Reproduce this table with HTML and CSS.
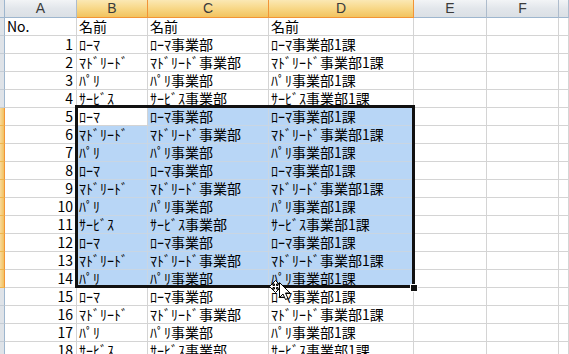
FILE: index.html
```html
<!DOCTYPE html>
<html lang="ja">
<head>
<meta charset="utf-8">
<link rel="stylesheet" href="styles.css">
</head>
<body>
<div class="sheet">
  <div class="row hdr">
    <div class="rh corner"></div><div class="ch">A</div><div class="ch on">B</div><div class="ch on">C</div><div class="ch on">D</div><div class="ch">E</div><div class="ch">F</div><div class="ch"></div>
  </div>
  <div class="row"><div class="rh"></div><div class="c">No.</div><div class="c">名前</div><div class="c">名前</div><div class="c">名前</div><div class="c"></div><div class="c"></div><div class="c"></div></div>
  <div class="row"><div class="rh"></div><div class="c n">1</div><div class="c">ﾛｰﾏ</div><div class="c">ﾛｰﾏ事業部</div><div class="c">ﾛｰﾏ事業部1課</div><div class="c"></div><div class="c"></div><div class="c"></div></div>
  <div class="row"><div class="rh"></div><div class="c n">2</div><div class="c">ﾏﾄﾞﾘｰﾄﾞ</div><div class="c">ﾏﾄﾞﾘｰﾄﾞ事業部</div><div class="c">ﾏﾄﾞﾘｰﾄﾞ事業部1課</div><div class="c"></div><div class="c"></div><div class="c"></div></div>
  <div class="row"><div class="rh"></div><div class="c n">3</div><div class="c">ﾊﾟﾘ</div><div class="c">ﾊﾟﾘ事業部</div><div class="c">ﾊﾟﾘ事業部1課</div><div class="c"></div><div class="c"></div><div class="c"></div></div>
  <div class="row"><div class="rh"></div><div class="c n">4</div><div class="c">ｻｰﾋﾞｽ</div><div class="c">ｻｰﾋﾞｽ事業部</div><div class="c">ｻｰﾋﾞｽ事業部1課</div><div class="c"></div><div class="c"></div><div class="c"></div></div>
  <div class="row"><div class="rh on"></div><div class="c n">5</div><div class="c">ﾛｰﾏ</div><div class="c s">ﾛｰﾏ事業部</div><div class="c s">ﾛｰﾏ事業部1課</div><div class="c"></div><div class="c"></div><div class="c"></div></div>
  <div class="row"><div class="rh on"></div><div class="c n">6</div><div class="c s">ﾏﾄﾞﾘｰﾄﾞ</div><div class="c s">ﾏﾄﾞﾘｰﾄﾞ事業部</div><div class="c s">ﾏﾄﾞﾘｰﾄﾞ事業部1課</div><div class="c"></div><div class="c"></div><div class="c"></div></div>
  <div class="row"><div class="rh on"></div><div class="c n">7</div><div class="c s">ﾊﾟﾘ</div><div class="c s">ﾊﾟﾘ事業部</div><div class="c s">ﾊﾟﾘ事業部1課</div><div class="c"></div><div class="c"></div><div class="c"></div></div>
  <div class="row"><div class="rh on"></div><div class="c n">8</div><div class="c s">ﾛｰﾏ</div><div class="c s">ﾛｰﾏ事業部</div><div class="c s">ﾛｰﾏ事業部1課</div><div class="c"></div><div class="c"></div><div class="c"></div></div>
  <div class="row"><div class="rh on"></div><div class="c n">9</div><div class="c s">ﾏﾄﾞﾘｰﾄﾞ</div><div class="c s">ﾏﾄﾞﾘｰﾄﾞ事業部</div><div class="c s">ﾏﾄﾞﾘｰﾄﾞ事業部1課</div><div class="c"></div><div class="c"></div><div class="c"></div></div>
  <div class="row"><div class="rh on"></div><div class="c n">10</div><div class="c s">ﾊﾟﾘ</div><div class="c s">ﾊﾟﾘ事業部</div><div class="c s">ﾊﾟﾘ事業部1課</div><div class="c"></div><div class="c"></div><div class="c"></div></div>
  <div class="row"><div class="rh on"></div><div class="c n">11</div><div class="c s">ｻｰﾋﾞｽ</div><div class="c s">ｻｰﾋﾞｽ事業部</div><div class="c s">ｻｰﾋﾞｽ事業部1課</div><div class="c"></div><div class="c"></div><div class="c"></div></div>
  <div class="row"><div class="rh on"></div><div class="c n">12</div><div class="c s">ﾛｰﾏ</div><div class="c s">ﾛｰﾏ事業部</div><div class="c s">ﾛｰﾏ事業部1課</div><div class="c"></div><div class="c"></div><div class="c"></div></div>
  <div class="row"><div class="rh on"></div><div class="c n">13</div><div class="c s">ﾏﾄﾞﾘｰﾄﾞ</div><div class="c s">ﾏﾄﾞﾘｰﾄﾞ事業部</div><div class="c s">ﾏﾄﾞﾘｰﾄﾞ事業部1課</div><div class="c"></div><div class="c"></div><div class="c"></div></div>
  <div class="row"><div class="rh on"></div><div class="c n">14</div><div class="c s">ﾊﾟﾘ</div><div class="c s">ﾊﾟﾘ事業部</div><div class="c s">ﾊﾟﾘ事業部1課</div><div class="c"></div><div class="c"></div><div class="c"></div></div>
  <div class="row"><div class="rh"></div><div class="c n">15</div><div class="c">ﾛｰﾏ</div><div class="c">ﾛｰﾏ事業部</div><div class="c">ﾛｰﾏ事業部1課</div><div class="c"></div><div class="c"></div><div class="c"></div></div>
  <div class="row"><div class="rh"></div><div class="c n">16</div><div class="c">ﾏﾄﾞﾘｰﾄﾞ</div><div class="c">ﾏﾄﾞﾘｰﾄﾞ事業部</div><div class="c">ﾏﾄﾞﾘｰﾄﾞ事業部1課</div><div class="c"></div><div class="c"></div><div class="c"></div></div>
  <div class="row"><div class="rh"></div><div class="c n">17</div><div class="c">ﾊﾟﾘ</div><div class="c">ﾊﾟﾘ事業部</div><div class="c">ﾊﾟﾘ事業部1課</div><div class="c"></div><div class="c"></div><div class="c"></div></div>
  <div class="row"><div class="rh"></div><div class="c n">18</div><div class="c">ｻｰﾋﾞｽ</div><div class="c">ｻｰﾋﾞｽ事業部</div><div class="c">ｻｰﾋﾞｽ事業部1課</div><div class="c"></div><div class="c"></div><div class="c"></div></div>

  <div class="selbox"></div>
  <div class="handle"></div>
  <svg class="cursor" width="30" height="24" viewBox="0 0 30 24">
    <path d="M6.5 0.5 L10 4 L7.5 4 L7.5 5.5 L9 5.5 L9 3 L12.5 6.5 L9 10 L9 7.5 L7.5 7.5 L7.5 9 L10 9 L6.5 12.5 L3 9 L5.5 9 L5.5 7.5 L4 7.5 L4 10 L0.5 6.5 L4 3 L4 5.5 L5.5 5.5 L5.5 4 L3 4 Z" fill="#fff" stroke="#000" stroke-width="1"/>
    <path d="M10.5 2.5 L10.5 17.5 L14 14 L16.5 19.5 L19 18.5 L16.5 13 L21 13 Z" fill="#fff" stroke="#000" stroke-width="1" stroke-linejoin="miter"/>
  </svg>
</div>
</body>
</html>
```
FILE: styles.css
```css
html, body {
  margin: 0;
  padding: 0;
  background: #fff;
  overflow: hidden;
}
.sheet {
  position: relative;
  width: 569px;
  height: 354px;
  overflow: hidden;
  font-family: "Noto Sans CJK JP", sans-serif;
  font-size: 14px;
  color: #000;
}
.row {
  display: grid;
  grid-template-columns: 5px 72px 71px 121px 145px 73px 72px 1fr;
  height: 18px;
}
.c {
  box-sizing: border-box;
  border-right: 1px solid #d4d4d4;
  border-bottom: 1px solid #d4d4d4;
  padding: 0 2px;
  line-height: 17px;
  white-space: nowrap;
}
.c.n {
  text-align: right;
  padding-right: 3px;
}
.c.s {
  background: #b8d6f6;
  border-right-color: #c9d6e3;
  border-bottom-color: #c9d6e3;
}
.rh {
  box-sizing: border-box;
  background: #dfe3e8;
  border-right: 1px solid #9eb6ce;
  border-bottom: 1px solid #c5cdd6;
}
.rh.on {
  background: linear-gradient(to right, #f9d99a, #f1c15f);
  border-right-color: #f29436;
  border-bottom-color: #f0b64f;
}
.hdr .rh {
  border-bottom: 1px solid #9eb6ce;
}
.ch {
  box-sizing: border-box;
  background: linear-gradient(to bottom, #f2f4f6 0%, #e2e6eb 50%, #dbe0e5 100%);
  border-right: 1px solid #aebccc;
  border-bottom: 1px solid #9eb6ce;
  text-align: center;
  font-family: "Liberation Sans", sans-serif;
  font-size: 14px;
  line-height: 17px;
  color: #3b3b3b;
}
.ch.on {
  background: linear-gradient(to bottom, #fbe8b4 0%, #f8d98b 45%, #f2c35e 100%);
  border-right-color: #f29436;
  border-bottom-color: #f29436;
}
.selbox {
  position: absolute;
  left: 75px;
  top: 105px;
  width: 340px;
  height: 183px;
  box-sizing: border-box;
  border: 3px solid #111;
  pointer-events: none;
}
.handle {
  position: absolute;
  left: 410px;
  top: 284px;
  width: 6px;
  height: 6px;
  background: #111;
  border: 1px solid #fff;
}
.cursor {
  position: absolute;
  left: 269px;
  top: 280px;
}
```
